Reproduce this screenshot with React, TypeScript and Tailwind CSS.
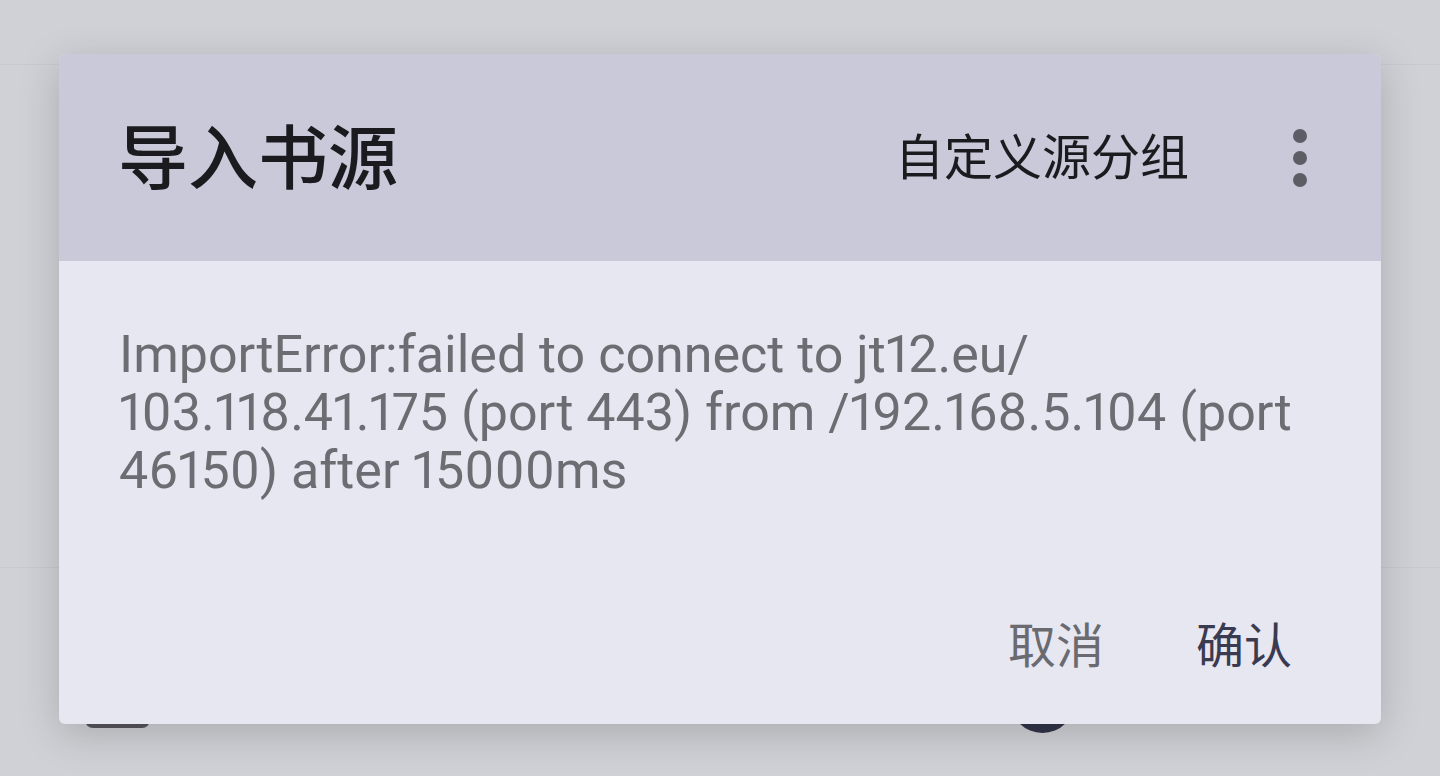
import React from "react";

const cjk = { fontFamily: '"Noto Sans CJK SC", "Noto Sans", sans-serif' };
const latin = { fontFamily: 'Roboto, "Noto Sans CJK SC", sans-serif' };

// faded list behind the dialog
const Backdrop = () => (
  <div className="h-full w-full flex flex-col bg-[#d0d1d6]">
    <div className="h-[65px] border-b border-[#c9cad0]" />
    <div className="h-[503px] border-b border-[#c9cad0]" />
    <div className="flex-1 flex items-end justify-between px-[85px]">
      <div className="w-[65px] h-[36px] mb-[48px] rounded-[8px] bg-[#55555c]" />
      <div className="w-[65px] h-[65px] mb-[43px] mr-[280px] rounded-full bg-[#34344a]" />
    </div>
  </div>
);

const Dots = () => (
  <div className="flex flex-col items-center gap-[8px] px-[4px]">
    <span className="w-[14px] h-[14px] rounded-full bg-[#5d5d66]" />
    <span className="w-[14px] h-[14px] rounded-full bg-[#5d5d66]" />
    <span className="w-[14px] h-[14px] rounded-full bg-[#5d5d66]" />
  </div>
);

export default function App() {
  return (
    <div className="relative w-[1440px] h-[776px] overflow-hidden">
      <Backdrop />

      {/* dialog */}
      <div className="absolute left-[59px] top-[54px] w-[1322px] h-[670px] rounded-[6px] overflow-hidden bg-[#e6e7f0] shadow-[0_10px_40px_rgba(0,0,0,0.18)] flex flex-col">
        <div className="h-[207px] bg-[#c9c9d9] flex items-center pl-[59px] pr-[70px] pb-[8px]">
          <h1 className="flex-1 text-[70px] font-medium text-[#1b1b1f] leading-none" style={cjk}>
            导入书源
          </h1>
          <span className="text-[49px] text-[#1b1b1f] leading-none mr-[100px]" style={cjk}>
            自定义源分组
          </span>
          <div className="pt-[8px]">
            <Dots />
          </div>
        </div>

        <div className="flex-1 flex flex-col pl-[60px] pr-[40px] pt-[65px]">
          <p className="text-[52px] leading-[58px] text-[#6c6c72] whitespace-nowrap proportional-nums" style={latin}>
            ImportError:failed to connect to jt12.eu/
            <br />
            103.118.41.175 (port 443) from /192.168.5.104 (port
            <br />
            46150) after 15000ms
          </p>

          <div className="mt-auto mb-[58px] flex justify-end items-center gap-[92px] pr-[49px]">
            <button className="text-[48px] leading-none text-[#6a6a70]" style={cjk}>
              取消
            </button>
            <button className="text-[48px] leading-none text-[#3a3a50]" style={cjk}>
              确认
            </button>
          </div>
        </div>
      </div>
    </div>
  );
}
